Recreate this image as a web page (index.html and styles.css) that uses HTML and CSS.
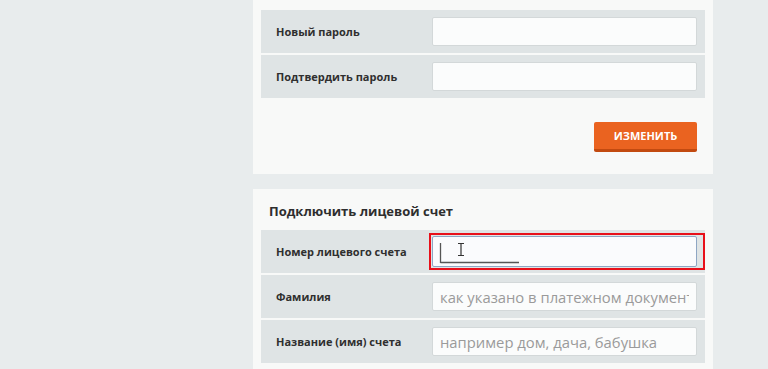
FILE: index.html
```html
<!DOCTYPE html>
<html lang="ru">
<head>
    <meta charset="UTF-8">
    <meta name="viewport" content="width=device-width, initial-scale=1.0">
    <title>Личный кабинет</title>
    <link rel="stylesheet" href="styles.css">
</head>
<body>
    <div class="page">
        <div class="card card-top">
            <div class="row">
                <div class="label">Новый пароль</div>
                <div class="field"><input class="input" type="password"></div>
            </div>
            <div class="row">
                <div class="label">Подтвердить пароль</div>
                <div class="field"><input class="input" type="password"></div>
            </div>
            <div class="actions">
                <button class="button">Изменить</button>
            </div>
        </div>

        <div class="card">
            <div class="title">Подключить лицевой счет</div>
            <div class="row">
                <div class="label">Номер лицевого счета</div>
                <div class="field marked">
                    <input class="input focused" type="text">
                    <svg class="caret" width="90" height="24" viewBox="0 0 90 24">
                        <path d="M1.5 2 V22 M1.5 21.5 H80" stroke="#555" stroke-width="1.3" fill="none"/>
                        <path d="M19 2.5 H25 M22 2.5 V14.5 M19 14.5 H25" stroke="#333" stroke-width="1.2" fill="none"/>
                    </svg>
                </div>
            </div>
            <div class="row">
                <div class="label">Фамилия</div>
                <div class="field"><input class="input" type="text" placeholder="как указано в платежном документе"></div>
            </div>
            <div class="row">
                <div class="label">Название (имя) счета</div>
                <div class="field"><input class="input" type="text" placeholder="например дом, дача, бабушка"></div>
            </div>
        </div>
    </div>
</body>
</html>
```

FILE: styles.css
```css
body {
    margin: 0;
    background-color: #e8eced;
    font-family: "Open Sans", "Liberation Sans", sans-serif;
    color: #333;
    overflow: hidden;
    height: 369px;
}

.page {
    width: 460px;
    margin-left: 253px;
}

.card {
    background-color: #f8f9f8;
    padding: 12px 8px 8px;
    margin-bottom: 15px;
}

.card-top {
    padding: 10px 8px 22px;
}

.title {
    font-size: 13px;
    font-weight: 700;
    color: #2e2e2e;
    line-height: 20px;
    padding: 0 0 9px 8px;
}

.row {
    display: flex;
    align-items: center;
    height: 43px;
    background-color: #dfe4e5;
    margin-bottom: 2px;
}

.label {
    width: 156px;
    padding-left: 15px;
    font-size: 11px;
    font-weight: 700;
    color: #2f2f2f;
}

.field {
    position: relative;
    flex: 1;
    padding-right: 8px;
    display: flex;
}

.input {
    width: 100%;
    height: 29px;
    box-sizing: border-box;
    border: 1px solid #d3d8d9;
    border-radius: 2px;
    background-color: #fbfcfc;
    font-family: "Open Sans", "Liberation Sans", sans-serif;
    font-size: 14.8px;
    padding: 0 7px;
    outline: none;
}

.input::placeholder {
    color: #9a9a9a;
}

.input.focused {
    height: 31px;
    border-color: #8ea6c4;
    background-color: #fafbfd;
}

.marked::after {
    content: '';
    position: absolute;
    left: -3px;
    right: 0;
    top: -3px;
    bottom: -3px;
    border: 2px solid #e8101a;
}

.caret {
    position: absolute;
    left: 7px;
    top: 5px;
}

.actions {
    display: flex;
    justify-content: flex-end;
    padding: 22px 8px 0 0;
}

.button {
    width: 103px;
    height: 30px;
    border: none;
    border-bottom: 3px solid #c24a10;
    border-radius: 2px;
    background-color: #ea6320;
    color: #fff;
    font-family: "Open Sans", "Liberation Sans", sans-serif;
    font-size: 11px;
    font-weight: 700;
    text-transform: uppercase;
    cursor: pointer;
}
```
